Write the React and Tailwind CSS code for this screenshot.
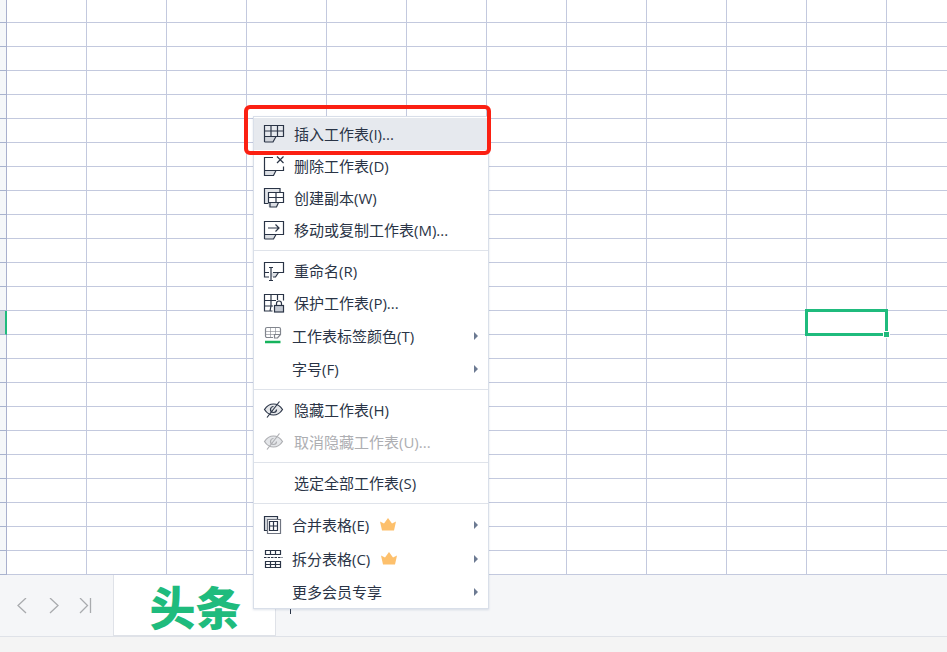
import React from "react";
import clsx from "clsx";

const rows = Array.from({ length: 24 }, (_, i) => i);
const columns = Array.from({ length: 24 }, (_, i) => i);
const activeCell = { row: 13, column: 10 };

const Icon = ({ children }) => (
  <svg
    viewBox="0 0 22 22"
    className="h-[22px] w-[22px] shrink-0"
    fill="none"
    stroke="currentColor"
    strokeWidth="1.2"
    aria-hidden="true"
  >
    {children}
  </svg>
);

const InsertIcon = () => (
  <Icon>
    <path d="M1.5 13.5h11.5l-3 5.5h-8.5z" fill="#d0d4db" stroke="none" />
    <path d="M1.5 19V2.5h19v11H13L10 19H1.5M1.5 8h19M1.5 13.5H13M8 2.5v11M14.5 2.5v11" />
  </Icon>
);

const DeleteIcon = () => (
  <Icon>
    <path d="M1.5 15.5h11.5l-2.5 5h-9z" fill="#dcdfe4" stroke="none" />
    <path d="M10 2.5H1.5v18h9l2.5-5h7.5v-4M1.5 15.5H13M14 1.5l6.5 6.5M20.5 1.5L14 8" />
  </Icon>
);

const CopyIcon = () => (
  <Icon>
    <path d="M1.5 16.5v-15h16v4h-12v11z" fill="#e3e6ea" stroke="none" />
    <path d="M5.5 15.5h10l-2 4.500h-8z" fill="#dcdfe4" stroke="none" />
    <path d="M5.5 16.5h-4v-15h15.5v4" />
    <path d="M7 15.5V20h6.5l2-4.5M5.500 5.500h15v10h-15zM5.500 10.500h15M13 5.500v10" />
  </Icon>
);

const MoveIcon = () => (
  <Icon>
    <path d="M1.5 15.5H13L10.5 20h-9z" fill="#dcdfe4" stroke="none" />
    <path d="M1.5 20V2.5h19v13H13L10.500 20h-9M1.500 15.500H13M5 9h11M12.500 5.500L16 9l-3.500 3.500" />
  </Icon>
);

const RenameIcon = () => (
  <Icon>
    <path d="M8 12.5h7.5L12.5 17H8z" fill="#dcdfe4" stroke="none" />
    <path d="M6 17H1.5V2.5h19v10h-5L12.5 17H10M1.5 12.5H6M10 12.5h5.5M8 7.5v13M6 7.5h4M6 20.5h4" />
  </Icon>
);

const ProtectIcon = () => (
  <Icon>
    <path d="M9.5 19h-8V2.5h19v6M1.5 8.5H13M1.5 14H10M8 2.5V14M14.5 2.5V8M8 14L7 19" />
    <rect x="11.5" y="13.5" width="9" height="6.5" fill="#c5cad3" />
    <path d="M13.5 13.5v-2a2.5 2.5 0 0 1 5 0v2" />
  </Icon>
);

const TabColorIcon = () => (
  <Icon>
    <g stroke="#81858d">
      <path d="M10 12.500H4A1.500 1.500 0 0 1 2.500 11V4A1.500 1.500 0 0 1 4 2.500h12A1.500 1.500 0 0 1 17.500 4v5.500l-3 3.500h-3v-3.500h6" />
      <path d="M3 6.500h14M3 9.500h9M7.500 3v9M12.500 3v6" strokeWidth="0.6" />
    </g>
    <path d="M2 17h15.5" stroke="#16b35c" strokeWidth="2.5" />
  </Icon>
);

const HideIcon = () => (
  <Icon>
    <path
      d="M1.5 10.5C4 6.5 7 5 10.5 5s6.5 1.5 9 5.5c-2.5 4-5.500 5.500-9 5.500s-6.500-1.500-9-5.500z"
      fill="#e4e6e9"
    />
    <path d="M10.5 7.5a3 3 0 1 0 3 3" />
    <path d="M4 18.5L16.5 2.5" />
  </Icon>
);

const MergeIcon = () => (
  <Icon>
    <path d="M1.5 2.5h13v3h-10v11h-3z" fill="#dcdfe4" stroke="none" />
    <path d="M4.5 16.5h-3v-14h13v3" />
    <path d="M4.5 5.5h13v14h-13z" stroke="#6f7480" />
    <path d="M6.500 7.500h8v9h-8zM6.500 12h8M10.500 7.500v9" />
  </Icon>
);

const SplitIcon = () => (
  <Icon>
    <path d="M2.500 2.500h15v4h-15zM7.500 2.500v4M12.500 2.500v4" />
    <path d="M1 9.500h18.500" strokeDasharray="2.5 1" />
    <path d="M2.500 13.500h15v6h-15zM2.500 16.500h15M7.500 13.500v6M12.500 13.500v6" />
  </Icon>
);

const Crown = () => (
  <svg viewBox="0 0 16 14" className="ml-[11px] h-[14px] w-4" fill="#fdc06c" aria-hidden="true">
    <path d="M0 3.5l4 2L8 0l4 5.500 4-2L14 12.500H2z" />
  </svg>
);

const menuGroups = [
  [
    { label: "插入工作表(I)...", icon: InsertIcon, active: true },
    { label: "删除工作表(D)", icon: DeleteIcon },
    { label: "创建副本(W)", icon: CopyIcon },
    { label: "移动或复制工作表(M)...", icon: MoveIcon },
  ],
  [
    { label: "重命名(R)", icon: RenameIcon },
    { label: "保护工作表(P)...", icon: ProtectIcon },
    { label: "工作表标签颜色(T)", icon: TabColorIcon, submenu: true },
    { label: "字号(F)", submenu: true },
  ],
  [
    { label: "隐藏工作表(H)", icon: HideIcon },
    { label: "取消隐藏工作表(U)...", icon: HideIcon, disabled: true },
  ],
  [{ label: "选定全部工作表(S)" }],
  [
    { label: "合并表格(E)", icon: MergeIcon, submenu: true, vip: true },
    { label: "拆分表格(C)", icon: SplitIcon, submenu: true, vip: true },
    { label: "更多会员专享", submenu: true, last: true },
  ],
];

const itemHeight = (item) => {
  if (item.vip) return "h-[34px]";
  if (item.submenu && !item.last) return "h-[33px]";
  return "h-8";
};

const MenuItem = ({ item }) => {
  const ItemIcon = item.icon;

  return (
    <button
      type="button"
      role="menuitem"
      disabled={item.disabled}
      aria-haspopup={item.submenu ? "menu" : undefined}
      className={clsx(
        "flex w-full items-center pr-[10px] pl-[9px] text-left text-[15px] leading-5 whitespace-nowrap",
        itemHeight(item),
        item.active && "bg-[#e6e9ee]",
        item.disabled ? "text-[#adaeb2]" : "text-[#2a3446]"
      )}
    >
      <span className={clsx("flex shrink-0", item.submenu ? "w-[29px]" : "w-[31px]")}>
        {ItemIcon && <ItemIcon />}
      </span>
      <span>{item.label}</span>
      {item.vip && <Crown />}
      {item.submenu && (
        <svg viewBox="0 0 4 8" className="ml-auto h-2 w-1" fill="#6c7a92" aria-hidden="true">
          <path d="M0 0l4 4-4 4z" />
        </svg>
      )}
    </button>
  );
};

const ContextMenu = () => (
  <div
    role="menu"
    className="absolute top-[116px] left-[253px] w-[236px] border border-[#d9dfe9] bg-white pt-px shadow-[0_1px_2px_rgba(90,110,150,0.2)]"
  >
    {menuGroups.map((group, i) => (
      <div
        key={i}
        role="group"
        className={clsx(
          i > 0 && "border-t border-[#dfe3ea] pt-1",
          i < menuGroups.length - 1 && "pb-1"
        )}
      >
        {group.map((item) => (
          <MenuItem key={item.label} item={item} />
        ))}
      </div>
    ))}
    {/* marco rojo sobre la primera opcion */}
    <div className="pointer-events-none absolute -top-3 -right-[3px] -left-[10px] h-[50px] rounded-md border-4 border-[#fb2012]" />
  </div>
);

const Sheet = () => (
  <div className="overflow-hidden bg-white">
    <table className="w-[1927px] table-fixed border-separate border-spacing-0">
      <colgroup>
        <col className="w-[7px]" />
        {columns.map((c) => (
          <col key={c} className="w-20" />
        ))}
      </colgroup>
      <tbody>
        {rows.map((r) => (
          <tr key={r} className={r === 0 ? "h-[23px]" : "h-6"}>
            <th
              scope="row"
              className={clsx(
                "border-b border-b-[#a9b3cf] p-0",
                r === activeCell.row
                  ? "border-r-2 border-r-[#1fbb7d] bg-[#d0d4dc]"
                  : "border-r border-r-[#a9b0cd] bg-[#f5f7f9]"
              )}
            />
            {columns.map((c) => (
              <td key={c} className="relative border-r border-b border-[#c3c9de] p-0">
                {r === activeCell.row && c === activeCell.column && (
                  <div className="absolute -inset-[2px] z-10 border-3 border-[#1fbb7d]">
                    <span className="absolute -right-1 -bottom-1 h-[5px] w-[5px] bg-[#1fbb7d] outline outline-white" />
                  </div>
                )}
              </td>
            ))}
          </tr>
        ))}
      </tbody>
    </table>
  </div>
);

const NavButton = ({ label, d }) => (
  <button type="button" aria-label={label} className="flex h-6 w-6 items-center justify-center">
    <svg viewBox="0 0 16 16" className="h-4 w-4" fill="none" stroke="#a9abae" strokeWidth="1.3">
      <path d={d} />
    </svg>
  </button>
);

const SheetTabs = () => (
  <div className="flex h-[62px] border-b border-[#dfe2e8] bg-[#f5f6f8]">
    <div className="flex w-[113px] shrink-0 items-center gap-2 pl-[10px]">
      <NavButton label="上一个" d="M12 0L4 7.5l8 7.5" />
      <NavButton label="下一个" d="M4 0l8 7.5L4 15" />
      <NavButton label="最后一个" d="M2 0l7.5 7.5L2 15M12.5 0v15" />
    </div>
    <button
      type="button"
      className="flex h-[61px] w-[163px] items-center justify-center border border-t-0 border-[#dfe2e8] bg-white pt-1 pl-[2px] text-[46px] leading-[60px] font-black text-[#1fbb7d]"
    >
      头条
    </button>
    <button type="button" aria-label="新建工作表" className="flex w-7 items-center justify-center text-[#2a3446]">
      <svg viewBox="0 0 16 16" className="h-4 w-4" stroke="currentColor">
        <path d="M8.5 0v16M0 8.5h16" />
      </svg>
    </button>
  </div>
);

const App = () => {
  return (
    <div className="relative flex min-h-screen flex-col overflow-hidden bg-[#f4f4f4] font-['Open_Sans','Noto_Sans_CJK_SC',sans-serif]">
      <Sheet />
      <SheetTabs />
      <ContextMenu />
    </div>
  );
};

export default App;
